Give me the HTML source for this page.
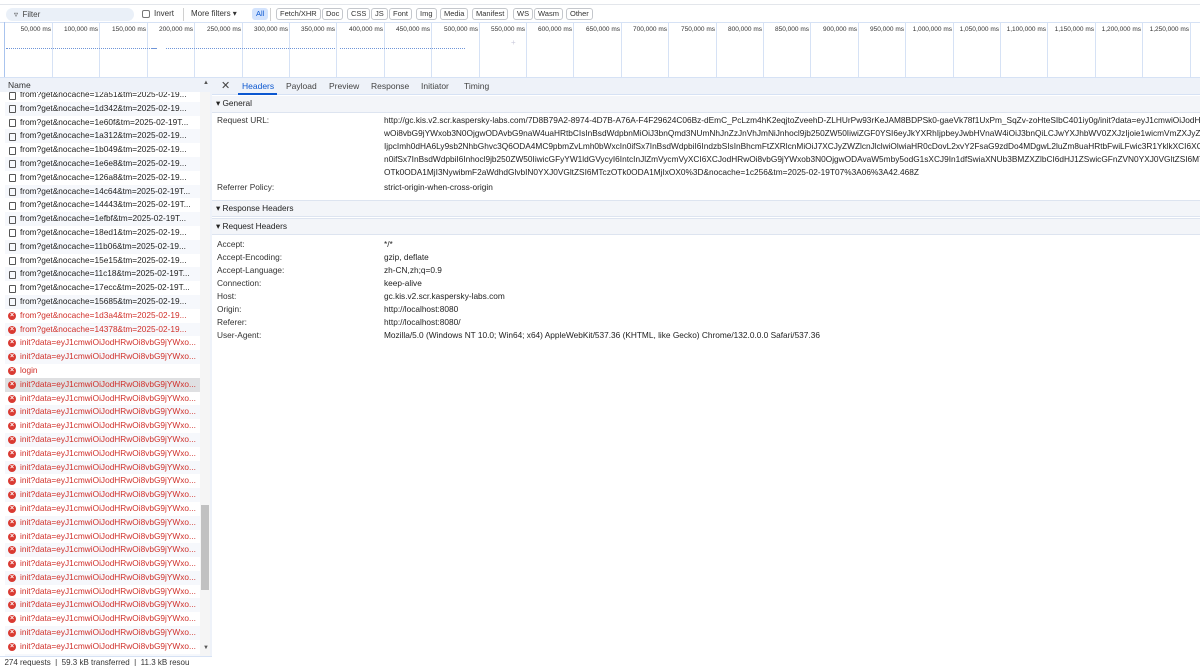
<!DOCTYPE html>
<html><head><meta charset="utf-8"><style>
*{box-sizing:border-box;margin:0;padding:0}
body{width:1200px;height:666px;overflow:hidden;background:#fff;font-family:"Liberation Sans",Arial,sans-serif;font-size:9px;color:#1f1f1f;position:relative}
.abs{position:absolute}
.btn{position:absolute;top:8px;height:12px;border:1px solid #c4c7cc;border-radius:3px;font-size:7.5px;line-height:10px;padding:0 3px;color:#333;background:#fff}
.tl{position:absolute;top:22px;height:55px;border-left:1px solid #d6e2f5}
.tlab{position:absolute;top:26px;font-size:6.5px;color:#333;text-align:right;width:50px}
.rows{position:absolute;left:5px;top:-4px;width:195px}
.row{position:relative;width:195px;height:13.8px;line-height:13.8px;padding-left:15px;white-space:nowrap;overflow:hidden;text-overflow:ellipsis;font-size:8.3px;color:#222}
.row.alt{background:#f6f8fc}
.row.err{color:#d0302a}
.row.sel{background:#dfe0e2}
.doc{position:absolute;left:4px;top:3.5px;width:7px;height:8px;border:1px solid #555;border-radius:1px}
.x{position:absolute;left:3px;top:3px;width:8px;height:8px;border-radius:50%;background:#d93a32;color:#fff;font-size:7px;line-height:8px;text-align:center;font-weight:bold}
.lab{position:absolute;left:217px;font-size:8.3px;color:#333;white-space:nowrap}
.val{position:absolute;left:384px;font-size:8.3px;color:#222;white-space:nowrap;overflow:hidden;width:816px}
.sec{position:absolute;left:212px;width:988px;height:17px;background:#f3f5f9;border-top:1px solid #dde4f0;border-bottom:1px solid #dde4f0;font-size:8.3px;line-height:15px;padding-left:4px;color:#222}
.dot{position:absolute;top:48px;height:1px;border-top:1px dotted #6f95d8}
</style></head><body>
<div class="abs" style="left:0;top:0;width:1200px;height:5px;border-bottom:1px solid #e3e6eb;background:#fff"></div>
<div class="abs" style="left:6px;top:8px;width:128px;height:13px;border-radius:7px;background:#eaf0f8;font-size:8px;line-height:13px;padding-left:8px;color:#444">&#9663;&nbsp; Filter</div>
<div class="abs" style="left:142px;top:10px;width:8px;height:8px;border:1px solid #777;border-radius:2px"></div>
<div class="abs" style="left:154px;top:9px;font-size:8px;color:#333">Invert</div>
<div class="abs" style="left:183px;top:8px;width:1px;height:13px;background:#d0d0d0"></div>
<div class="abs" style="left:191px;top:9px;font-size:8px;color:#333">More filters ▾</div>
<div class="btn" style="left:252px;background:#d3e3fd;border-color:#d3e3fd;color:#0b57d0">All</div>
<div class="abs" style="left:270px;top:8px;width:1px;height:13px;background:#d0d0d0"></div>
<div class="btn" style="left:276px">Fetch/XHR</div>
<div class="btn" style="left:322px">Doc</div>
<div class="btn" style="left:347px">CSS</div>
<div class="btn" style="left:371px">JS</div>
<div class="btn" style="left:389px">Font</div>
<div class="btn" style="left:416px">Img</div>
<div class="btn" style="left:440px">Media</div>
<div class="btn" style="left:472px">Manifest</div>
<div class="btn" style="left:513px">WS</div>
<div class="btn" style="left:534px">Wasm</div>
<div class="btn" style="left:566px">Other</div>
<div class="abs" style="left:0;top:22px;width:1200px;height:1px;background:#d6e2f5"></div>
<div class="abs" style="left:4px;top:22px;width:1px;height:55px;background:#aac4ee"></div>
<div class="tl" style="left:52px"></div><div class="tl" style="left:99px"></div><div class="tl" style="left:147px"></div><div class="tl" style="left:194px"></div><div class="tl" style="left:242px"></div><div class="tl" style="left:289px"></div><div class="tl" style="left:336px"></div><div class="tl" style="left:384px"></div><div class="tl" style="left:431px"></div><div class="tl" style="left:479px"></div><div class="tl" style="left:526px"></div><div class="tl" style="left:573px"></div><div class="tl" style="left:621px"></div><div class="tl" style="left:668px"></div><div class="tl" style="left:716px"></div><div class="tl" style="left:763px"></div><div class="tl" style="left:810px"></div><div class="tl" style="left:858px"></div><div class="tl" style="left:905px"></div><div class="tl" style="left:953px"></div><div class="tl" style="left:1000px"></div><div class="tl" style="left:1047px"></div><div class="tl" style="left:1095px"></div><div class="tl" style="left:1142px"></div><div class="tl" style="left:1190px"></div>
<div class="tlab" style="left:1px">50,000 ms</div><div class="tlab" style="left:48px">100,000 ms</div><div class="tlab" style="left:96px">150,000 ms</div><div class="tlab" style="left:143px">200,000 ms</div><div class="tlab" style="left:191px">250,000 ms</div><div class="tlab" style="left:238px">300,000 ms</div><div class="tlab" style="left:285px">350,000 ms</div><div class="tlab" style="left:333px">400,000 ms</div><div class="tlab" style="left:380px">450,000 ms</div><div class="tlab" style="left:428px">500,000 ms</div><div class="tlab" style="left:475px">550,000 ms</div><div class="tlab" style="left:522px">600,000 ms</div><div class="tlab" style="left:570px">650,000 ms</div><div class="tlab" style="left:617px">700,000 ms</div><div class="tlab" style="left:665px">750,000 ms</div><div class="tlab" style="left:712px">800,000 ms</div><div class="tlab" style="left:759px">850,000 ms</div><div class="tlab" style="left:807px">900,000 ms</div><div class="tlab" style="left:854px">950,000 ms</div><div class="tlab" style="left:902px">1,000,000 ms</div><div class="tlab" style="left:949px">1,050,000 ms</div><div class="tlab" style="left:996px">1,100,000 ms</div><div class="tlab" style="left:1044px">1,150,000 ms</div><div class="tlab" style="left:1091px">1,200,000 ms</div><div class="tlab" style="left:1139px">1,250,000 ms</div>
<div class="dot" style="left:6px;width:146px"></div>
<div class="dot" style="left:152px;width:5px;border-top:1px solid #6f95d8"></div>
<div class="dot" style="left:166px;width:169px"></div>
<div class="dot" style="left:340px;width:125px"></div>
<div class="abs" style="left:511px;top:38px;font-size:8px;color:#ccd">+</div>
<div class="abs" style="left:0;top:77px;width:210px;height:15px;background:#eef2f9;border-top:1px solid #d6e2f5;font-size:8.5px;line-height:14px;padding-left:8px;color:#333">Name</div>
<div class="abs" style="left:203px;top:80px;font-size:6px;color:#555">▲</div>
<div class="abs" style="left:210px;top:77px;width:990px;height:18px;background:#eef2f9;border-top:1px solid #d6e2f5;border-bottom:1px solid #d6e2f5"></div>
<div class="abs" style="left:221px;top:79px;font-size:11px;color:#444">✕</div>
<div class="abs" style="left:242px;top:81px;font-size:8.5px;color:#0b57d0">Headers</div>
<div class="abs" style="left:238px;top:93px;width:39px;height:2px;background:#0b57d0"></div>
<div class="abs" style="left:286px;top:81px;font-size:8.5px;color:#444">Payload</div>
<div class="abs" style="left:329px;top:81px;font-size:8.5px;color:#444">Preview</div>
<div class="abs" style="left:371px;top:81px;font-size:8.5px;color:#444">Response</div>
<div class="abs" style="left:421px;top:81px;font-size:8.5px;color:#444">Initiator</div>
<div class="abs" style="left:464px;top:81px;font-size:8.5px;color:#444">Timing</div>
<div class="abs" style="left:0;top:92px;width:210px;height:564px;overflow:hidden;background:#fff">
<div class="abs" style="left:200px;top:0;width:10px;height:564px;background:#f5f5f5"></div>
<div class="abs" style="left:201px;top:413px;width:8px;height:85px;background:#c1c1c1"></div>
<div class="abs" style="left:203px;top:553px;font-size:6px;color:#555">▼</div>
<div class="rows">
<div class="row"><span class="doc"></span>from?get&amp;nocache=12a51&amp;tm=2025-02-19...</div>
<div class="row alt"><span class="doc"></span>from?get&amp;nocache=1d342&amp;tm=2025-02-19...</div>
<div class="row"><span class="doc"></span>from?get&amp;nocache=1e60f&amp;tm=2025-02-19T...</div>
<div class="row alt"><span class="doc"></span>from?get&amp;nocache=1a312&amp;tm=2025-02-19...</div>
<div class="row"><span class="doc"></span>from?get&amp;nocache=1b049&amp;tm=2025-02-19...</div>
<div class="row alt"><span class="doc"></span>from?get&amp;nocache=1e6e8&amp;tm=2025-02-19...</div>
<div class="row"><span class="doc"></span>from?get&amp;nocache=126a8&amp;tm=2025-02-19...</div>
<div class="row alt"><span class="doc"></span>from?get&amp;nocache=14c64&amp;tm=2025-02-19T...</div>
<div class="row"><span class="doc"></span>from?get&amp;nocache=14443&amp;tm=2025-02-19T...</div>
<div class="row alt"><span class="doc"></span>from?get&amp;nocache=1efbf&amp;tm=2025-02-19T...</div>
<div class="row"><span class="doc"></span>from?get&amp;nocache=18ed1&amp;tm=2025-02-19...</div>
<div class="row alt"><span class="doc"></span>from?get&amp;nocache=11b06&amp;tm=2025-02-19...</div>
<div class="row"><span class="doc"></span>from?get&amp;nocache=15e15&amp;tm=2025-02-19...</div>
<div class="row alt"><span class="doc"></span>from?get&amp;nocache=11c18&amp;tm=2025-02-19T...</div>
<div class="row"><span class="doc"></span>from?get&amp;nocache=17ecc&amp;tm=2025-02-19T...</div>
<div class="row alt"><span class="doc"></span>from?get&amp;nocache=15685&amp;tm=2025-02-19...</div>
<div class="row err"><span class="x">×</span>from?get&amp;nocache=1d3a4&amp;tm=2025-02-19...</div>
<div class="row err alt"><span class="x">×</span>from?get&amp;nocache=14378&amp;tm=2025-02-19...</div>
<div class="row err"><span class="x">×</span>init?data=eyJ1cmwiOiJodHRwOi8vbG9jYWxo...</div>
<div class="row err alt"><span class="x">×</span>init?data=eyJ1cmwiOiJodHRwOi8vbG9jYWxo...</div>
<div class="row err"><span class="x">×</span>login</div>
<div class="row err sel"><span class="x">×</span>init?data=eyJ1cmwiOiJodHRwOi8vbG9jYWxo...</div>
<div class="row err"><span class="x">×</span>init?data=eyJ1cmwiOiJodHRwOi8vbG9jYWxo...</div>
<div class="row err alt"><span class="x">×</span>init?data=eyJ1cmwiOiJodHRwOi8vbG9jYWxo...</div>
<div class="row err"><span class="x">×</span>init?data=eyJ1cmwiOiJodHRwOi8vbG9jYWxo...</div>
<div class="row err alt"><span class="x">×</span>init?data=eyJ1cmwiOiJodHRwOi8vbG9jYWxo...</div>
<div class="row err"><span class="x">×</span>init?data=eyJ1cmwiOiJodHRwOi8vbG9jYWxo...</div>
<div class="row err alt"><span class="x">×</span>init?data=eyJ1cmwiOiJodHRwOi8vbG9jYWxo...</div>
<div class="row err"><span class="x">×</span>init?data=eyJ1cmwiOiJodHRwOi8vbG9jYWxo...</div>
<div class="row err alt"><span class="x">×</span>init?data=eyJ1cmwiOiJodHRwOi8vbG9jYWxo...</div>
<div class="row err"><span class="x">×</span>init?data=eyJ1cmwiOiJodHRwOi8vbG9jYWxo...</div>
<div class="row err alt"><span class="x">×</span>init?data=eyJ1cmwiOiJodHRwOi8vbG9jYWxo...</div>
<div class="row err"><span class="x">×</span>init?data=eyJ1cmwiOiJodHRwOi8vbG9jYWxo...</div>
<div class="row err alt"><span class="x">×</span>init?data=eyJ1cmwiOiJodHRwOi8vbG9jYWxo...</div>
<div class="row err"><span class="x">×</span>init?data=eyJ1cmwiOiJodHRwOi8vbG9jYWxo...</div>
<div class="row err alt"><span class="x">×</span>init?data=eyJ1cmwiOiJodHRwOi8vbG9jYWxo...</div>
<div class="row err"><span class="x">×</span>init?data=eyJ1cmwiOiJodHRwOi8vbG9jYWxo...</div>
<div class="row err alt"><span class="x">×</span>init?data=eyJ1cmwiOiJodHRwOi8vbG9jYWxo...</div>
<div class="row err"><span class="x">×</span>init?data=eyJ1cmwiOiJodHRwOi8vbG9jYWxo...</div>
<div class="row err alt"><span class="x">×</span>init?data=eyJ1cmwiOiJodHRwOi8vbG9jYWxo...</div>
<div class="row err"><span class="x">×</span>init?data=eyJ1cmwiOiJodHRwOi8vbG9jYWxo...</div>
<div class="row err alt"><span class="x">×</span>init?data=eyJ1cmwiOiJodHRwOi8vbG9jYWxo...</div>
</div>
</div>
<div class="abs" style="left:210px;top:92px;width:2px;height:574px;background:#eef2f9"></div>
<div class="abs" style="left:0;top:656px;width:212px;height:10px;background:#fff;border-top:1px solid #d6e2f5;font-size:8px;line-height:12px;color:#333;white-space:nowrap;overflow:hidden">&nbsp;&nbsp;274 requests&nbsp;&nbsp;|&nbsp;&nbsp;59.3 kB transferred&nbsp;&nbsp;|&nbsp;&nbsp;11.3 kB resou</div>
<div class="sec" style="top:96px;border-top:none">▾ General</div>
<div class="lab" style="top:115px">Request URL:</div>
<div class="val" style="top:115px">http://gc.kis.v2.scr.kaspersky-labs.com/7D8B79A2-8974-4D7B-A76A-F4F29624C06Bz-dEmC_PcLzm4hK2eqjtoZveehD-ZLHUrPw93rKeJAM8BDPSk0-gaeVk78f1UxPm_SqZv-zoHteSIbC401iy0g/init?data=eyJ1cmwiOiJodHRwOi8vbG9j</div>
<div class="val" style="top:128px">wOi8vbG9jYWxob3N0OjgwODAvbG9naW4uaHRtbCIsInBsdWdpbnMiOiJ3bnQmd3NUmNhJnZzJnVhJmNiJnhocl9jb250ZW50IiwiZGF0YSI6eyJkYXRhIjpbeyJwbHVnaW4iOiJ3bnQiLCJwYXJhbWV0ZXJzIjoie1wicmVmZXJyZXJcIjpcImh0</div>
<div class="val" style="top:141px">IjpcImh0dHA6Ly9sb2NhbGhvc3Q6ODA4MC9pbmZvLmh0bWxcIn0ifSx7InBsdWdpbiI6IndzbSIsInBhcmFtZXRlcnMiOiJ7XCJyZWZlcnJlclwiOlwiaHR0cDovL2xvY2FsaG9zdDo4MDgwL2luZm8uaHRtbFwiLFwic3R1YklkXCI6XCJodHRw</div>
<div class="val" style="top:154px">n0ifSx7InBsdWdpbiI6Inhocl9jb250ZW50IiwicGFyYW1ldGVycyI6IntcInJlZmVycmVyXCI6XCJodHRwOi8vbG9jYWxob3N0OjgwODAvaW5mby5odG1sXCJ9In1dfSwiaXNUb3BMZXZlbCI6dHJ1ZSwicGFnZVN0YXJ0VGltZSI6MTczOTk0</div>
<div class="val" style="top:167px">OTk0ODA1MjI3NywibmF2aWdhdGlvbIN0YXJ0VGltZSI6MTczOTk0ODA1MjIxOX0%3D&amp;nocache=1c256&amp;tm=2025-02-19T07%3A06%3A42.468Z</div>
<div class="lab" style="top:182px">Referrer Policy:</div>
<div class="val" style="top:182px">strict-origin-when-cross-origin</div>
<div class="sec" style="top:200px">▾ Response Headers</div>
<div class="sec" style="top:218px">▾ Request Headers</div>
<div class="lab" style="top:239px">Accept:</div><div class="val" style="top:239px">*/*</div>
<div class="lab" style="top:252px">Accept-Encoding:</div><div class="val" style="top:252px">gzip, deflate</div>
<div class="lab" style="top:265px">Accept-Language:</div><div class="val" style="top:265px">zh-CN,zh;q=0.9</div>
<div class="lab" style="top:278px">Connection:</div><div class="val" style="top:278px">keep-alive</div>
<div class="lab" style="top:291px">Host:</div><div class="val" style="top:291px">gc.kis.v2.scr.kaspersky-labs.com</div>
<div class="lab" style="top:304px">Origin:</div><div class="val" style="top:304px">http://localhost:8080</div>
<div class="lab" style="top:317px">Referer:</div><div class="val" style="top:317px">http://localhost:8080/</div>
<div class="lab" style="top:330px">User-Agent:</div><div class="val" style="top:330px">Mozilla/5.0 (Windows NT 10.0; Win64; x64) AppleWebKit/537.36 (KHTML, like Gecko) Chrome/132.0.0.0 Safari/537.36</div>
</body></html>
